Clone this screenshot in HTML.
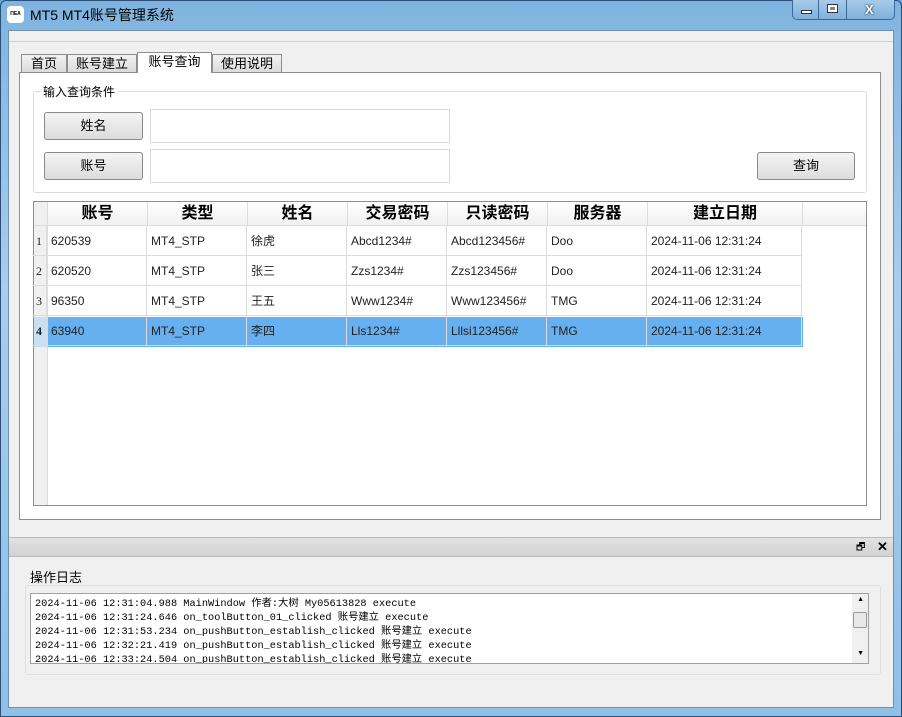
<!DOCTYPE html>
<html><head><meta charset="utf-8"><style>
*{margin:0;padding:0;box-sizing:border-box}
body{width:902px;height:717px;overflow:hidden;background:#6aa6d8;font-family:"Liberation Sans","Noto Sans CJK SC",sans-serif;font-size:12px;color:#000;position:relative}
.a{position:absolute}
.frame{left:0;top:0;width:902px;height:717px;background:linear-gradient(#7fb4e0,#a9cdec 40%,#8fc0e6);border:1px solid #2b4f78;border-radius:6px 6px 0 0}
.client{left:8px;top:30px;width:886px;height:678px;background:#f0f0f0;border:1px solid #6f8fb0}
.btn{background:linear-gradient(#f4f4f4,#dcdcdc);border:1px solid #8a8a8a;border-radius:3px;text-align:center;font-size:13px}
.tab{top:54px;height:19px;border:1px solid #8e8e8e;border-bottom:none;background:linear-gradient(#f2f2f2,#dadada);text-align:center;font-size:13px;line-height:18px}
.cell{position:absolute;height:30px;line-height:30px;padding-left:4px;border-right:1px solid #dcdcdc;border-bottom:1px solid #dcdcdc;font-size:12px;color:#222;white-space:nowrap}
.hd{position:absolute;top:0;height:24px;line-height:24px;text-align:center;font-size:16px;font-weight:bold;border-right:1px solid #dcdcdc;background:linear-gradient(#fff,#f0f0f0)}
.log{font-family:"Liberation Mono","Noto Sans CJK SC",monospace;font-size:10.3px;line-height:14px;white-space:nowrap}
</style></head><body>
<div class="a frame"></div>
<div class="a" style="left:7px;top:6px;width:17px;height:17px;background:#fff;border-radius:4px;font-size:5px;line-height:17px;text-align:center;font-weight:bold">ΠEA</div>
<div class="a" style="left:30px;top:5px;font-size:14px;color:#000">MT5 MT4账号管理系统</div>
<div class="a" style="left:792px;top:0;width:103px;height:20px;border:1px solid #3c6a98;border-top:none;border-radius:0 0 5px 5px;background:linear-gradient(#a8cbea,#7fb0dd)"></div>
<div class="a" style="left:818px;top:0;width:1px;height:20px;background:#3c6a98"></div>
<div class="a" style="left:846px;top:0;width:1px;height:20px;background:#3c6a98"></div>
<div class="a" style="left:801px;top:10px;width:11px;height:4px;background:#fff;border:1px solid #333"></div>
<div class="a" style="left:827px;top:4px;width:11px;height:9px;background:#fff;border:1px solid #333"><div style="margin:2px;height:3px;background:#888"></div></div>
<div class="a" style="left:865px;top:2px;font-size:13px;font-weight:bold;color:#fff;text-shadow:0 0 2px #000">X</div>
<div class="a client"></div>
<div class="a" style="left:9px;top:41px;width:884px;height:1px;background:#d0d0d0"></div>
<div class="a tab" style="left:21px;width:46px">首页</div>
<div class="a tab" style="left:67px;width:70px">账号建立</div>
<div class="a tab" style="left:137px;top:52px;height:21px;width:75px;background:#fff;z-index:2">账号查询</div>
<div class="a tab" style="left:212px;width:70px">使用说明</div>
<div class="a" style="left:19px;top:72px;width:862px;height:448px;background:#fff;border:1px solid #8e8e8e"></div>
<div class="a" style="left:33px;top:91px;width:834px;height:102px;border:1px solid #dcdcdc;border-radius:3px"></div>
<div class="a" style="left:40px;top:83px;background:#fff;padding:0 3px;font-size:12px">输入查询条件</div>
<div class="a btn" style="left:44px;top:112px;width:99px;height:28px;line-height:26px">姓名</div>
<div class="a btn" style="left:44px;top:152px;width:99px;height:28px;line-height:26px">账号</div>
<div class="a" style="left:150px;top:109px;width:300px;height:34px;border:1px solid #dadada"></div>
<div class="a" style="left:150px;top:149px;width:300px;height:34px;border:1px solid #dadada"></div>
<div class="a btn" style="left:757px;top:152px;width:98px;height:28px;line-height:26px">查询</div>
<div class="a" style="left:33px;top:201px;width:834px;height:305px;border:1px solid #8e8e8e;background:#fff;overflow:hidden">
 <div class="a" style="left:0;top:0;width:14px;height:304px;background:#f0f0f0;border-right:1px solid #dcdcdc"></div>
 <div class="hd" style="left:14px;width:100px">账号</div><div class="hd" style="left:114px;width:100px">类型</div><div class="hd" style="left:214px;width:100px">姓名</div><div class="hd" style="left:314px;width:100px">交易密码</div><div class="hd" style="left:414px;width:100px">只读密码</div><div class="hd" style="left:514px;width:100px">服务器</div><div class="hd" style="left:614px;width:155px">建立日期</div><div class="hd" style="left:769px;width:70px;border:none"></div>
 <div class="a" style="left:0;top:23px;width:834px;height:1px;background:#dcdcdc"></div>
 <div class="a" style="left:0;top:115px;width:769px;height:30px;background:#66b0f0"></div>
 <div class="a" style="left:0;top:115px;width:14px;height:30px;background:#c8dff4"></div>
</div>
<div class="a" id="rows" style="left:33px;top:226px"></div>
<script>
var d=[["1","620539","MT4_STP","徐虎","Abcd1234#","Abcd123456#","Doo"],["2","620520","MT4_STP","张三","Zzs1234#","Zzs123456#","Doo"],["3","96350","MT4_STP","王五","Www1234#","Www123456#","TMG"],["4","63940","MT4_STP","李四","Lls1234#","Lllsi123456#","TMG"]];
var h="";d.forEach(function(r,i){var y=i*30;h+='<div class="cell" style="left:0;top:'+y+'px;width:14px;padding-left:3px;font-family:Liberation Serif,serif;'+(i==3?'font-weight:bold':'')+'">'+r[0]+'</div>';
for(var c=1;c<7;c++)h+='<div class="cell" style="left:'+(14+(c-1)*100)+'px;top:'+y+'px;width:100px">'+r[c]+'</div>';
h+='<div class="cell" style="left:614px;top:'+y+'px;width:155px">2024-11-06 12:31:24</div>';});
document.getElementById("rows").innerHTML=h;
</script>
<div class="a" style="left:9px;top:537px;width:884px;height:20px;background:linear-gradient(#e2e2e2,#d2d2d2);border-top:1px solid #bbb;border-bottom:1px solid #bbb"></div>
<div class="a" style="left:856px;top:540px;font-size:10px">🗗</div>
<div class="a" style="left:877px;top:539px;font-size:13px;font-weight:bold">✕</div>
<div class="a" style="left:30px;top:567px;font-size:13px">操作日志</div>
<div class="a" style="left:25px;top:585px;width:856px;height:90px;border:1px solid #e0e0e0;border-radius:3px"></div>
<div class="a" style="left:30px;top:593px;width:839px;height:71px;border:1px solid #a0a0a0;background:#fff;overflow:hidden;padding:3px 0 0 4px">
<div class="log">2024-11-06 12:31:04.988 MainWindow 作者:大树 My05613828 execute</div>
<div class="log">2024-11-06 12:31:24.646 on_toolButton_01_clicked 账号建立 execute</div>
<div class="log">2024-11-06 12:31:53.234 on_pushButton_establish_clicked 账号建立 execute</div>
<div class="log">2024-11-06 12:32:21.419 on_pushButton_establish_clicked 账号建立 execute</div>
<div class="log">2024-11-06 12:33:24.504 on_pushButton_establish_clicked 账号建立 execute</div>
<div class="a" style="right:0;top:0;width:16px;height:69px;background:#f0f0f0"></div>
<div class="a" style="right:1px;top:18px;width:14px;height:16px;border:1px solid #999;background:#e8e8e8;border-radius:2px"></div>
<div class="a" style="right:4px;top:2px;font-size:7px">▲</div>
<div class="a" style="right:4px;top:56px;font-size:7px">▼</div>
</div>
</body></html>
